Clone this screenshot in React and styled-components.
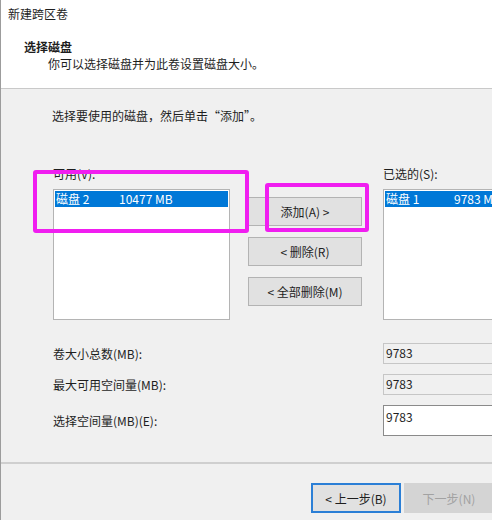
import React from "react";
import styled, { createGlobalStyle } from "styled-components";

const Global = createGlobalStyle`
  html, body { margin: 0; padding: 0; background: #f0f0f0; overflow: hidden; }
  body { width: 492px; height: 520px; }
  * { box-sizing: border-box; }
`;

const Window = styled.div`
  width: 510px;
  height: 520px;
  border-left: 1px solid #9c9c9c;
  background: #f0f0f0;
  font-family: "Noto Sans CJK SC", "Noto Sans", sans-serif;
  font-size: 12px;
  color: #1e1e1e;
  display: flex;
  flex-direction: column;
`;

const Header = styled.div`
  height: 89px;
  background: #fff;
  border-bottom: 1px solid #c9c9c9;
  padding: 6px 0 0 7px;
  display: flex;
  flex-direction: column;
`;

const Text = styled.div`
  line-height: 16px;
  white-space: nowrap;
  font-weight: ${(p) => (p.$bold ? 700 : 400)};
  color: ${(p) => p.$color || "inherit"};
  margin-left: ${(p) => p.$indent || 0}px;
  margin-top: ${(p) => p.$top || 0}px;
`;

const Body = styled.div`
  padding: 19px 0 0 51px;
  height: 375px;
  border-bottom: 2px solid #cfcfcf;
  display: flex;
  flex-direction: column;
`;

const ListArea = styled.div`
  position: relative;
  display: flex;
  margin-top: 42px;
`;

const Column = styled.div`
  display: flex;
  flex-direction: column;
  width: ${(p) => p.$w}px;
  margin-left: ${(p) => p.$ml || 0}px;
  padding-top: ${(p) => p.$pt || 0}px;
  gap: ${(p) => p.$gap || 0}px;
`;

const Label = styled.div`
  line-height: 16px;
  height: 23px;
  padding-left: 1px;
  white-space: nowrap;
`;

const ListBox = styled.div`
  height: 131px;
  margin-left: 1px;
  background: #fff;
  border: 1px solid #b4b4b4;
  padding: 1px 1px;
`;

const ListItem = styled.div`
  display: flex;
  height: 16px;
  line-height: 16px;
  background: #0078d7;
  color: #fff;
  white-space: nowrap;
  padding-left: 1px;
`;

const Cell = styled.span`
  width: ${(p) => p.$w}px;
  flex: none;
`;

const Button = styled.div`
  height: ${(p) => p.$h || 29}px;
  width: ${(p) => p.$w || "auto"};
  display: flex;
  align-items: center;
  justify-content: center;
  background: ${(p) => (p.$disabled ? "#d4d4d4" : "#e1e1e1")};
  color: ${(p) => (p.$disabled ? "#a2a2a2" : "#1e1e1e")};
  border: ${(p) => (p.$focused ? "2px solid #2b7fd6" : `1px solid ${p.$disabled ? "#d4d4d4" : "#b3b3b3"}`)};
  white-space: nowrap;
`;

const Highlight = styled.div`
  position: absolute;
  left: ${(p) => p.$x}px;
  top: ${(p) => p.$y}px;
  width: ${(p) => p.$w}px;
  height: ${(p) => p.$h}px;
  border: 4px solid #f01ef0;
  border-radius: 3px;
  pointer-events: none;
`;

const Fields = styled.div`
  display: grid;
  grid-template-columns: 331px 117px;
  grid-template-rows: 21px 21px 31px;
  row-gap: 10px;
  margin-top: 23px;
`;

const FieldLabel = styled.div`
  display: flex;
  align-items: center;
  padding-left: 1px;
  white-space: nowrap;
`;

const Field = styled.div`
  background: ${(p) => (p.$editable ? "#fff" : "#f0f0f0")};
  border: 1px solid ${(p) => (p.$editable ? "#8a8a8a" : "#c6c6c6")};
  padding: ${(p) => (p.$editable ? "3px 2px" : "1px 2px")};
  line-height: 16px;
`;

const Footer = styled.div`
  display: flex;
  justify-content: flex-end;
  gap: 3px;
  padding: 19px 16px 0 0;
`;

export default function App() {
  return (
    <>
      <Global />
      <Window>
        <Header>
          <Text>新建跨区卷</Text>
          <Text $bold $indent={16} $top={17}>选择磁盘</Text>
          <Text $indent={40} $top={1}>你可以选择磁盘并为此卷设置磁盘大小。</Text>
        </Header>
        <Body>
          <Text>选择要使用的磁盘，然后单击“添加”。</Text>
          <ListArea>
            <Column $w={178}>
              <Label>可用(V):</Label>
              <ListBox>
                <ListItem>
                  <Cell $w={63}>磁盘 2</Cell>
                  <Cell $w={100}>10477 MB</Cell>
                </ListItem>
              </ListBox>
            </Column>
            <Column $w={114} $ml={18} $pt={31} $gap={11}>
              <Button>添加(A) &gt;</Button>
              <Button>&lt; 删除(R)</Button>
              <Button>&lt; 全部删除(M)</Button>
            </Column>
            <Column $w={120} $ml={20}>
              <Label>已选的(S):</Label>
              <ListBox>
                <ListItem>
                  <Cell $w={68}>磁盘 1</Cell>
                  <Cell $w={60}>9783 MB</Cell>
                </ListItem>
              </ListBox>
            </Column>
            <Highlight $x={-19} $y={4} $w={216} $h={63} />
            <Highlight $x={213} $y={17} $w={104} $h={49} />
          </ListArea>
          <Fields>
            <FieldLabel>卷大小总数(MB):</FieldLabel>
            <Field>9783</Field>
            <FieldLabel>最大可用空间量(MB):</FieldLabel>
            <Field>9783</Field>
            <FieldLabel>选择空间量(MB)(E):</FieldLabel>
            <Field $editable>9783</Field>
          </Fields>
        </Body>
        <Footer>
          <Button $w="90px" $h={30} $focused>&lt; 上一步(B)</Button>
          <Button $w="90px" $h={30} $disabled>下一步(N)</Button>
        </Footer>
      </Window>
    </>
  );
}
